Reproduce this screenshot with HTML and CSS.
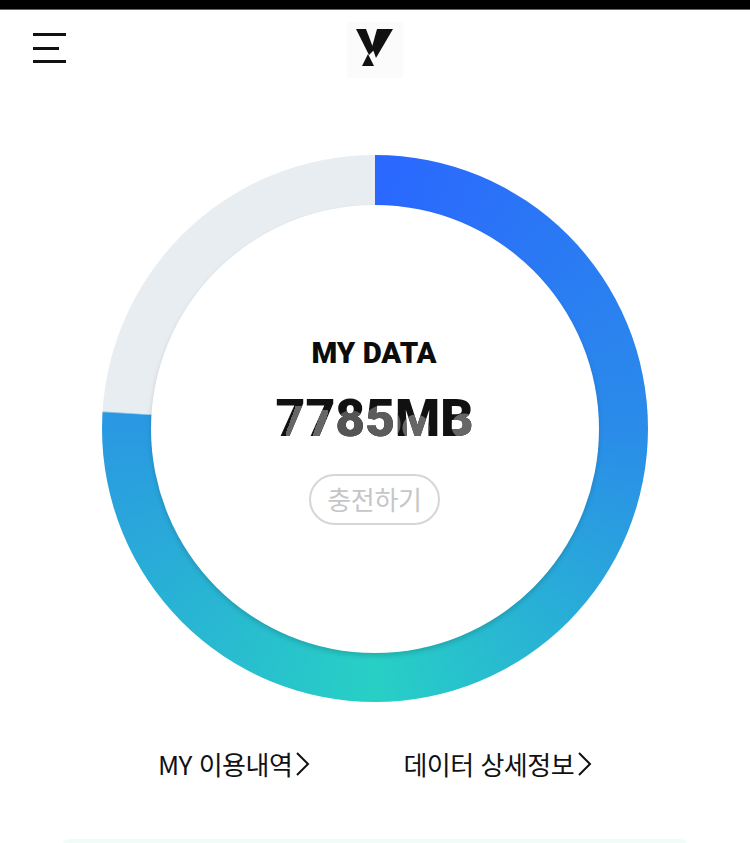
FILE: index.html
```html
<!DOCTYPE html>
<html lang="ko">
<head>
    <meta charset="UTF-8">
    <meta name="viewport" content="width=device-width, initial-scale=1.0">
    <title>MY DATA</title>
    <link rel="stylesheet" href="styles.css">
</head>
<body>
    <div class="statusBar"></div>

    <header class="header">
        <button class="menuButton" aria-label="menu">
            <span></span>
            <span class="short"></span>
            <span></span>
        </button>
        <div class="logo">
            <svg width="56" height="56" viewBox="0 0 56 56">
                <polygon points="9,7 19,7 27,28 22,33" fill="#111"/>
                <polygon points="30,7 46,7 29,36 25,25" fill="#111"/>
                <polygon points="15,44 27,44 21,32" fill="#111"/>
            </svg>
        </div>
        <div></div>
    </header>

    <section class="ring">
        <div class="ringInner">
            <div class="title">MY DATA</div>
            <div class="amount">7785MB</div>
            <button class="chargeButton">충전하기</button>
        </div>
    </section>

    <nav class="links">
        <a class="link" href="#">MY 이용내역
            <svg width="15" height="26" viewBox="0 0 15 26"><path d="M2 2 L13 13 L2 24" fill="none" stroke="#111" stroke-width="2"/></svg>
        </a>
        <a class="link" href="#">데이터 상세정보
            <svg width="15" height="26" viewBox="0 0 15 26"><path d="M2 2 L13 13 L2 24" fill="none" stroke="#111" stroke-width="2"/></svg>
        </a>
    </nav>

    <div class="card"></div>
</body>
</html>
```

FILE: styles.css
```css
* {
    margin: 0;
    padding: 0;
    box-sizing: border-box;
}

html,
body {
    height: 843px;
    overflow: hidden;
}

body {
    background-color: #fff;
    font-family: "Noto Sans CJK KR", "Noto Sans", sans-serif;
    color: #111;
}

.statusBar {
    height: 10px;
    background-color: #000;
    border-bottom: 1px solid #666;
}

.header {
    display: grid;
    grid-template-columns: 1fr auto 1fr;
    align-items: start;
    padding: 12px 33px 0;
}

.menuButton {
    display: flex;
    flex-direction: column;
    align-items: flex-start;
    gap: 10.5px;
    width: 33px;
    margin-top: 11px;
    border: none;
    background: none;
}

.menuButton span {
    display: block;
    width: 33px;
    height: 3px;
    background-color: #111;
}

.menuButton .short {
    width: 26px;
}

.logo {
    width: 56px;
    height: 56px;
    background-color: #fbfbfb;
}

.logo svg {
    display: block;
}

.ring {
    display: flex;
    align-items: center;
    justify-content: center;
    width: 546px;
    height: 547px;
    margin: 77px 0 0 102px;
    border-radius: 50%;
    background: conic-gradient(#2a67ff 0deg, #2a8ce9 90deg, #27d0c5 180deg, #2a97e3 273.3deg, #e8edf1 273.7deg, #e8edf1 360deg);
}

.ringInner {
    display: flex;
    flex-direction: column;
    align-items: center;
    width: 448px;
    height: 448px;
    padding-top: 129px;
    border-radius: 50%;
    background-color: #fff;
    box-shadow: 0 3px 5px rgba(0, 0, 0, 0.15);
}

.title {
    margin-right: 2px;
    font-family: Roboto, sans-serif;
    font-size: 29.4px;
    font-weight: 900;
    line-height: 38px;
    color: #0c0c0c;
}

/* grey shapes inside the digits, clipped to the text */
.amount {
    margin: 16px 1px 0 0;
    font-family: Roboto, sans-serif;
    font-size: 51.5px;
    font-weight: 900;
    line-height: 62px;
    color: transparent;
    background:
        radial-gradient(circle at 75px 39px, #555 16px, transparent 17px),
        radial-gradient(circle at 106px 36px, #5c5c5c 18px, transparent 19px),
        radial-gradient(circle at 140px 40px, #666 13px, transparent 14px),
        radial-gradient(circle at 188px 38px, #666 12px, transparent 13px),
        linear-gradient(110deg, transparent 35%, #666 35%, #666 65%, transparent 65%) 10px 18px / 16px 32px no-repeat,
        linear-gradient(110deg, transparent 35%, #666 35%, #666 65%, transparent 65%) 37px 22px / 15px 28px no-repeat,
        #111;
    -webkit-background-clip: text;
    background-clip: text;
}

.chargeButton {
    width: 131px;
    height: 51px;
    margin: 24px 1px 0 0;
    border: 2px solid #d6d6d6;
    border-radius: 26px;
    background: none;
    font-family: "Noto Sans CJK KR", sans-serif;
    font-size: 26px;
    letter-spacing: -0.3px;
    line-height: 1;
    color: #c6c6c6;
}

.links {
    display: flex;
    margin: 43px 0 0 158px;
    gap: 93px;
}

.link {
    display: flex;
    align-items: center;
    gap: 3px;
    font-size: 26px;
    line-height: 38px;
    letter-spacing: -0.5px;
    color: #111;
    text-decoration: none;
    white-space: nowrap;
}

.card {
    width: 626px;
    height: 40px;
    margin: 56px 0 0 62px;
    border-radius: 8px 8px 0 0;
    background-color: #eefdf8;
}
```
